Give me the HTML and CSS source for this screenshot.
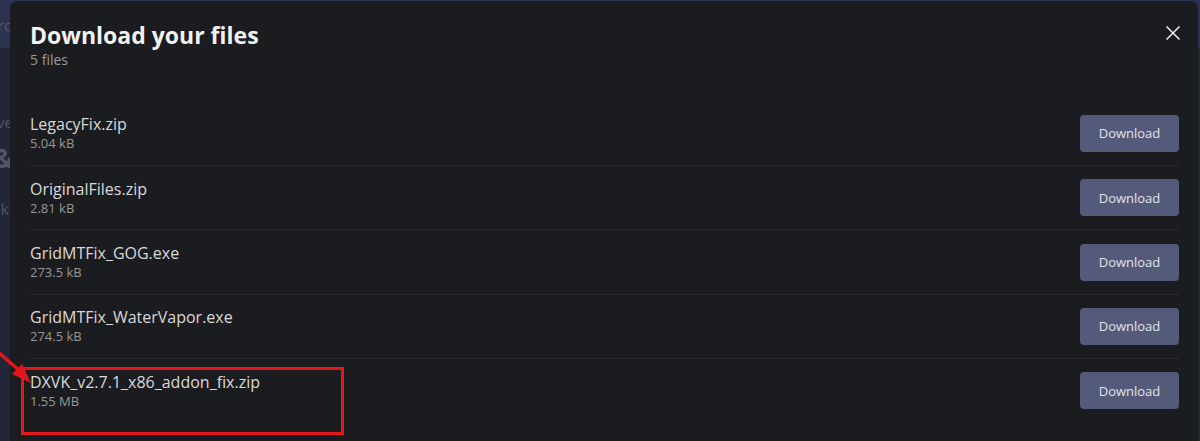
FILE: index.html
```html
<!DOCTYPE html>
<html>
<head>
<meta charset="utf-8">
<link rel="stylesheet" href="styles.css">
</head>
<body>
<div class="page">
  <div class="topbar"><div class="peek peek-top"><span>Pro</span></div></div>
  <div class="page-body">
    <div class="peek peek-1"><span>Remove</span></div>
    <div class="peek peek-2"><span>&amp;</span></div>
    <div class="peek peek-3"><span>Backl</span></div>
  </div>
</div>

<div class="modal">
  <button class="close" aria-label="Close">
    <svg width="16" height="16" viewBox="0 0 16 16"><path d="M1.5 1.5 L14.5 14.5 M14.5 1.5 L1.5 14.5" stroke="#e6e6e6" stroke-width="1.6" fill="none"/></svg>
  </button>
  <h1 class="title">Download your files</h1>
  <div class="subtitle">5 files</div>
  <ul class="files">
    <li class="file">
      <div class="info"><div class="name">LegacyFix.zip</div><div class="size">5.04 kB</div></div>
      <button class="dl">Download</button>
    </li>
    <li class="file">
      <div class="info"><div class="name">OriginalFiles.zip</div><div class="size">2.81 kB</div></div>
      <button class="dl">Download</button>
    </li>
    <li class="file">
      <div class="info"><div class="name">GridMTFix_GOG.exe</div><div class="size">273.5 kB</div></div>
      <button class="dl">Download</button>
    </li>
    <li class="file">
      <div class="info"><div class="name">GridMTFix_WaterVapor.exe</div><div class="size">274.5 kB</div></div>
      <button class="dl">Download</button>
    </li>
    <li class="file">
      <div class="info"><div class="name">DXVK_v2.7.1_x86_addon_fix.zip</div><div class="size">1.55 MB</div></div>
      <button class="dl">Download</button>
    </li>
  </ul>
</div>

<div class="highlight"></div>
<svg class="arrow" width="40" height="50" viewBox="0 0 40 50">
  <path d="M-2 0 L20 19" stroke="#e3161c" stroke-width="3.5" fill="none"/>
  <polygon points="31,31 12,22 22,12" fill="#e3161c"/>
</svg>
</body>
</html>
```
FILE: styles.css
```css
* { box-sizing: border-box; }
html, body { margin: 0; padding: 0; }
body {
  width: 1200px;
  height: 441px;
  overflow: hidden;
  background: #222738;
  font-family: "Open Sans", "Noto Sans", sans-serif;
  position: relative;
}
.page { height: 441px; display: flex; flex-direction: column; }
.topbar {
  height: 48px;
  background: #2b3350;
  display: flex;
  align-items: center;
}
.page-body { flex: 1; position: relative; }
.peek {
  width: 13px;
  overflow: hidden;
  display: flex;
  justify-content: flex-end;
  white-space: nowrap;
  color: #4c5468;
  font-size: 15px;
}
.peek span { flex: none; }
.peek-top { color: #4f5870; margin-top: 2px; }
.peek-1 { margin-top: 64px; font-size: 15px; }
.peek-2 { margin-top: 8px; font-size: 26px; font-weight: 700; color: #505666; }
.peek-3 { margin-top: 22px; font-size: 16px; }

.modal {
  position: absolute;
  left: 10px;
  top: 1px;
  right: 2px;
  bottom: -20px;
  background: #1b1c1f;
  border-radius: 8px;
  padding: 20px 19px 0 20px;
}
.close {
  position: absolute;
  top: 20px;
  right: 13px;
  width: 24px;
  height: 24px;
  padding: 0;
  border: 0;
  background: transparent;
  display: flex;
  align-items: center;
  justify-content: center;
}
.title {
  margin: 0;
  font-size: 23px;
  line-height: 29px;
  font-weight: 700;
  color: #f2f2f2;
}
.subtitle {
  font-size: 14px;
  line-height: 19px;
  color: #9a9a9a;
}
.files {
  list-style: none;
  margin: 32.7px 0 0;
  padding: 0;
}
.file {
  display: flex;
  align-items: center;
  justify-content: space-between;
  padding: 12.7px 0 12.63px;
  border-bottom: 1px solid #2b2c30;
}
.file:last-child { border-bottom: 0; }
.name {
  font-size: 16px;
  line-height: 20px;
  color: #d9d9d9;
}
.size {
  font-size: 13px;
  line-height: 18px;
  color: #979797;
}
.dl {
  width: 99px;
  height: 37px;
  border: 0;
  border-radius: 4px;
  background: #545a79;
  color: #e2e3ea;
  font-family: "Open Sans", "Noto Sans", sans-serif;
  font-size: 13px;
  padding: 0;
}
.highlight {
  position: absolute;
  left: 21px;
  top: 367px;
  width: 323px;
  height: 68px;
  border: 3px solid #e3161c;
}
.arrow {
  position: absolute;
  left: 0;
  top: 352px;
}
```
